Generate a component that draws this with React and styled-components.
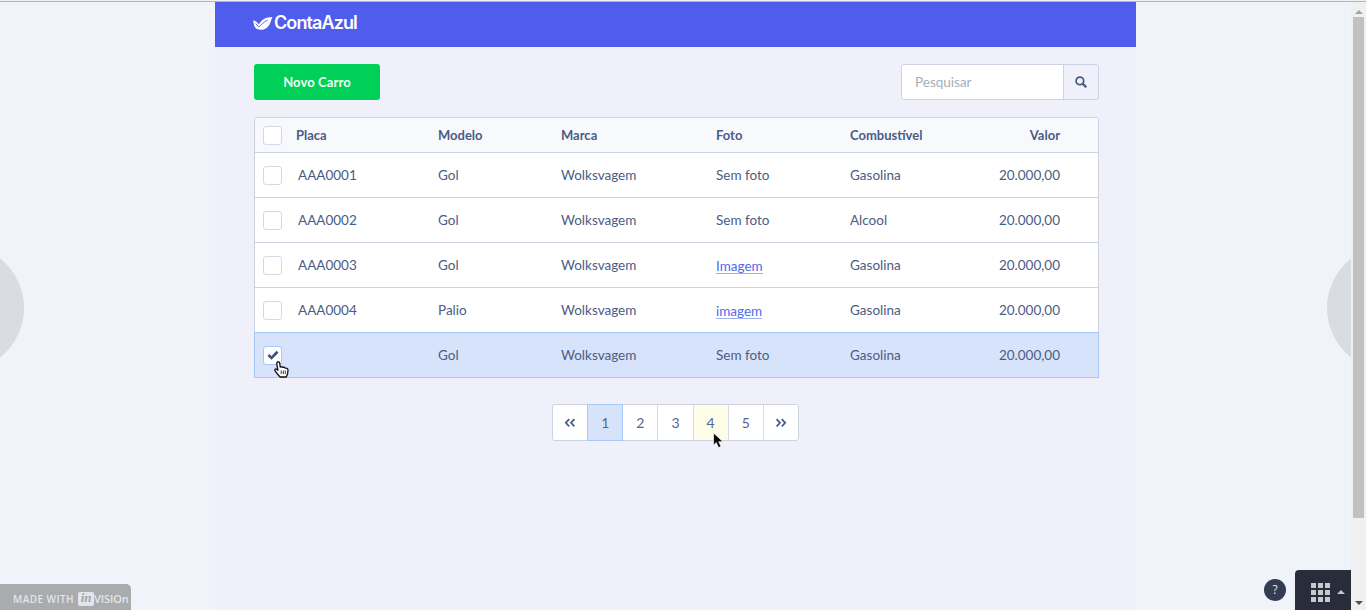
import React from "react";
import styled, { createGlobalStyle, css } from "styled-components";

const GlobalStyle = createGlobalStyle`
  *, *::before, *::after { box-sizing: border-box; }
  body { margin: 0; overflow: hidden; background: #f0f3f9; font-family: Lato, "Liberation Sans", sans-serif; }
`;

const Viewport = styled.div`
  display: flex;
  width: 1366px;
  height: 610px;
  border-top: 1px solid #f1f1f1;
  position: relative;
  overflow: hidden;
`;

const Stage = styled.div`
  flex: 1;
  position: relative;
  overflow: hidden;
  border-top: 1px solid #b4b4b6;
  background: #f0f3f9;
`;

const Screen = styled.main`
  width: 921px;
  height: 100%;
  margin-left: 215px;
  background: #f0f0fa;
`;

const Header = styled.header`
  height: 45px;
  padding: 0 0 3px 38px;
  display: flex;
  align-items: center;
  background: #505cec;
`;

const Brand = styled.span`
  margin-left: 1px;
  color: #fff;
  font: 600 18px/20px Inter, sans-serif;
  letter-spacing: ${(p) => p.$spacing}px;
`;

const Body = styled.div`
  padding: 17px 37px 0 39px;
`;

const Toolbar = styled.div`
  display: flex;
  justify-content: space-between;
  margin-bottom: 17px;
`;

const PrimaryButton = styled.button`
  width: 126px;
  height: 36px;
  padding: 0 0 0;
  border: 0;
  border-radius: 3px;
  background: #00cf58;
  color: #f2fff6;
  font: 700 13px/36px Lato, sans-serif;
  letter-spacing: 0.12px;
`;

const Search = styled.div`
  display: flex;
  width: 198px;
  height: 36px;
  border: 1px solid #cdd3e3;
  border-radius: 3px;
  overflow: hidden;
`;

const SearchField = styled.div`
  flex: 1;
  padding-left: 13px;
  background: #fff;
  color: #a8adb8;
  font-size: 13.5px;
  line-height: 34px;
`;

const SearchButton = styled.div`
  width: 35px;
  display: flex;
  align-items: center;
  justify-content: center;
  border-left: 1px solid #cdd3e3;
`;

const Table = styled.section`
  border: 1px solid #cdd3e3;
  border-radius: 3px 3px 0 0;
  background: #fff;
  height: 261px;
`;

const Row = styled.div`
  display: grid;
  grid-template-columns: 183px 123px 155px 134px 1fr;
  align-items: center;
  height: 45px;
  padding-right: 38px;
  border-bottom: 1px solid #cdd3e3;
  color: #4a5c86;
  font-size: 13.5px;
  line-height: 20px;
  ${(p) =>
    p.$head &&
    css`
      height: 35px;
      background: #f8f9fd;
      font-size: 13px;
      font-weight: 700;
      letter-spacing: -0.1px;
      border-radius: 3px 3px 0 0;
    `}
  ${(p) =>
    p.$selected &&
    css`
      height: 46px;
      margin: -1px -1px 0;
      padding: 0 39px 0 1px;
      border: 1px solid #a5c9f8;
      border-width: 1px 0;
      box-shadow: inset 1px 0 #a5c9f8, inset -1px 0 #a5c9f8;
      background: #d7e3fb;
    `}
`;

const LeadCell = styled.div`
  display: flex;
  align-items: center;
  padding-left: 8px;
  gap: ${(p) => (p.$head ? 14 : 16)}px;
`;

const LastCells = styled.div`
  display: flex;
  justify-content: space-between;
`;

const Text = styled.span`
  justify-self: start;
  letter-spacing: ${(p) => p.$spacing || 0}px;
`;

const PhotoLink = styled(Text)`
  color: #4f6ceb;
  height: 18px;
  border-bottom: 1px solid #9fb0f5;
`;

const Box = styled.span`
  width: 19px;
  height: 19px;
  display: flex;
  align-items: center;
  justify-content: center;
  border: 1px solid ${(p) => (p.$checked ? "#a5c9f8" : "#d3d9e8")};
  border-radius: 3px;
  background: #fff;
`;

const Pager = styled.nav`
  display: flex;
  width: 247px;
  height: 37px;
  margin: 26px auto 0 298px;
  border: 1px solid #cdd3e3;
  border-radius: 3px;
  background: #fff;
`;

const Page = styled.span`
  width: 35px;
  flex: 1 1 0;
  display: flex;
  align-items: center;
  justify-content: center;
  border-left: 1px solid #d5dae8;
  color: #556690;
  font-size: 14px;
  &:first-child { border-left: 0; }
  ${(p) => p.$hover && css`background: #fdfde8;`}
  ${(p) =>
    p.$active &&
    css`
      margin: -1px -1px -1px 0;
      border: 1px solid #a5c9f8;
      background: #d7e3fb;
      z-index: 1;
    `}
`;

const SideArrow = styled.div`
  position: absolute;
  top: 243px;
  ${(p) => p.$side}: -102px;
  width: 126px;
  height: 126px;
  border-radius: 50%;
  background: #d9dce1;
`;

const MadeWith = styled.div`
  position: absolute;
  left: 0;
  bottom: 0;
  width: 131px;
  height: 26px;
  padding: 3px 0 0 13px;
  display: flex;
  align-items: center;
  border-radius: 0 5px 0 0;
  background: #a9abae;
  color: #e3e5e9;
  font: 600 10px/14px "Open Sans", sans-serif;
  letter-spacing: 0.45px;
`;

const InBadge = styled.span`
  width: 16px;
  height: 14px;
  margin-left: 4px;
  border-radius: 2px;
  background: #e3e5e9;
  color: #a3a5a9;
  font: italic 700 13px/12px "Liberation Serif", serif;
  letter-spacing: 0;
  text-align: center;
`;

const Vision = styled.span`
  font: 600 11px/14px "Open Sans", sans-serif;
  letter-spacing: -0.1px;
`;

const Help = styled.div`
  position: absolute;
  right: 65px;
  bottom: 9px;
  width: 22px;
  height: 22px;
  border-radius: 50%;
  background: #333c50;
  color: #e4e7ec;
  font: 12px/22px "Open Sans", sans-serif;
  text-align: center;
`;

const GridMenu = styled.div`
  position: absolute;
  right: 0;
  bottom: 0;
  width: 56px;
  height: 40px;
  display: flex;
  align-items: center;
  gap: 7px;
  padding: 4px 0 0 16px;
  border-radius: 4px 0 0 0;
  background: #272d3b;
`;

const Dots = styled.div`
  display: grid;
  grid-template-columns: repeat(3, 5px);
  grid-auto-rows: 5px;
  gap: 2px;
`;

const Dot = styled.i`
  background: #c6c8cd;
`;

const Triangle = styled.i`
  border: solid transparent;
  border-width: ${(p) => (p.$down ? "4px 4px 0" : "0 4px 4px")};
  ${(p) => (p.$down ? "border-top-color" : "border-bottom-color")}: ${(p) => p.$color};
`;

const Scrollbar = styled.aside`
  width: 15px;
  display: flex;
  flex-direction: column;
  align-items: center;
  padding: 8px 0 5px;
  border-top: 1px solid #b4b4b6;
  background: #f0f0f1;
`;

const Thumb = styled.div`
  width: 11px;
  height: 501px;
  margin: 3px 0 auto;
  background: #c1c1c1;
`;

const Cursor = styled.svg`
  position: absolute;
  left: ${(p) => p.$x}px;
  top: ${(p) => p.$y}px;
  z-index: 5;
`;

const Leaf = () => (
  <svg width="20" height="15" viewBox="0 0 20 15">
    <path d="M.4 4.2c2.3.7 4.3 2 5.4 4.4C8.300 3.600 12.700.900 19.500.900 17.600 4.400 17.600 9 13.600 11.900 10.400 14.200 6.800 13.900 4.500 13.300 1.300 11.800.500 8.300.400 4.200Z" fill="#fff" />
    <path d="M2.600 7.500 5.700 11.100C8 9.300 10.300 6 14.700 4.100" fill="none" stroke="#505cec" strokeWidth=".9" />
  </svg>
);

const Magnifier = () => (
  <svg width="12" height="12" viewBox="0 0 12 12" fill="none" stroke="#465985">
    <circle cx="4.900" cy="4.900" r="3.800" strokeWidth="1.700" />
    <path d="m7.700 7.700 2.900 2.900" strokeWidth="2.200" strokeLinecap="round" />
  </svg>
);

const Check = () => (
  <svg width="12" height="10" viewBox="0 0 12 10">
    <path d="M1.400 5.100 4.500 7.900 10.500 1.700" fill="none" stroke="#3f5180" strokeWidth="2.700" />
  </svg>
);

const Chevrons = ({ flip }) => (
  <svg width="12" height="10" viewBox="0 0 12 10" transform={flip ? "scale(-1 1)" : undefined}>
    <path d="M5.200 1.200 1.800 4.800l3.400 3.600M10.400 1.200 7 4.800l3.400 3.600" fill="none" stroke="#465985" strokeWidth="1.700" />
  </svg>
);

const HandCursor = () => (
  <Cursor $x={273} $y={359} width="17" height="19" viewBox="0 0 17 19">
    <path d="M4.200 2.200c1.100-1 2.400-.2 2.500 1L7.200 7l1.600-.4 1 .8 1.500-.2.900.9c1.800-.3 2.800.5 2.800 2l-.4 3.700-1.300 3.200H7.100L3.800 13.300l-2-3c-.2-1.200 1-1.900 2-1.100l1.100 1L3.700 3.800Z" fill="#fff" stroke="#111" strokeWidth="1.300" strokeLinejoin="round" />
    <path d="M8.200 10.500V14M10.300 10.500V14M12.300 10.500V14" stroke="#222" strokeWidth=".9" />
  </Cursor>
);

const ArrowCursor = () => (
  <Cursor $x={712} $y={431} width="13" height="18" viewBox="0 0 13 18">
    <path d="M1.500 1v12.200l2.800-2.600 2.200 5 2.500-1.100-2.200-4.800H11Z" fill="#090909" stroke="#eee" strokeWidth=".8" />
  </Cursor>
);

const cars = [
  ["AAA0001", "Gol", "Sem foto", "Gasolina"],
  ["AAA0002", "Gol", "Sem foto", "Alcool"],
  ["AAA0003", "Gol", "Imagem", "Gasolina"],
  ["AAA0004", "Palio", "imagem", "Gasolina"],
  ["", "Gol", "Sem foto", "Gasolina"],
];

export default function App() {
  return (
    <Viewport>
      <GlobalStyle />
      <Stage>
        <Screen>
          <Header>
            <Leaf />
            <Brand $spacing={-0.9}>ContaAzul</Brand>
          </Header>
          <Body>
            <Toolbar>
              <PrimaryButton>Novo Carro</PrimaryButton>
              <Search>
                <SearchField>Pesquisar</SearchField>
                <SearchButton><Magnifier /></SearchButton>
              </Search>
            </Toolbar>
            <Table>
              <Row $head>
                <LeadCell $head><Box /><Text>Placa</Text></LeadCell>
                <Text>Modelo</Text>
                <Text>Marca</Text>
                <Text>Foto</Text>
                <LastCells><Text>Combustível</Text><Text>Valor</Text></LastCells>
              </Row>
              {cars.map(([plate, model, photo, fuel], i) => (
                <Row key={i} $selected={!plate}>
                  <LeadCell>
                    <Box $checked={!plate}>{!plate && <Check />}</Box>
                    {plate && <Text>{plate}</Text>}
                  </LeadCell>
                  <Text>{model}</Text>
                  <Text>Wolksvagem</Text>
                  {photo === "Sem foto" ? <Text>{photo}</Text> : <PhotoLink>{photo}</PhotoLink>}
                  <LastCells><Text>{fuel}</Text><Text>20.000,00</Text></LastCells>
                </Row>
              ))}
            </Table>
            <Pager>
              <Page><Chevrons /></Page>
              <Page $active>1</Page>
              <Page>2</Page>
              <Page>3</Page>
              <Page $hover>4</Page>
              <Page>5</Page>
              <Page><Chevrons flip /></Page>
            </Pager>
          </Body>
        </Screen>
        <SideArrow $side="left" />
        <SideArrow $side="right" />
        <MadeWith>MADE WITH<InBadge>in</InBadge><Vision>VISIOn</Vision></MadeWith>
        <Help>?</Help>
        <GridMenu>
          <Dots>{Array.from({ length: 9 }, (_, i) => <Dot key={i} />)}</Dots>
          <Triangle $color="#c6c8cd" />
        </GridMenu>
      </Stage>
      <Scrollbar>
        <Triangle $color="#a3a3a3" />
        <Thumb />
        <Triangle $down $color="#505050" />
      </Scrollbar>
      <HandCursor />
      <ArrowCursor />
    </Viewport>
  );
}
